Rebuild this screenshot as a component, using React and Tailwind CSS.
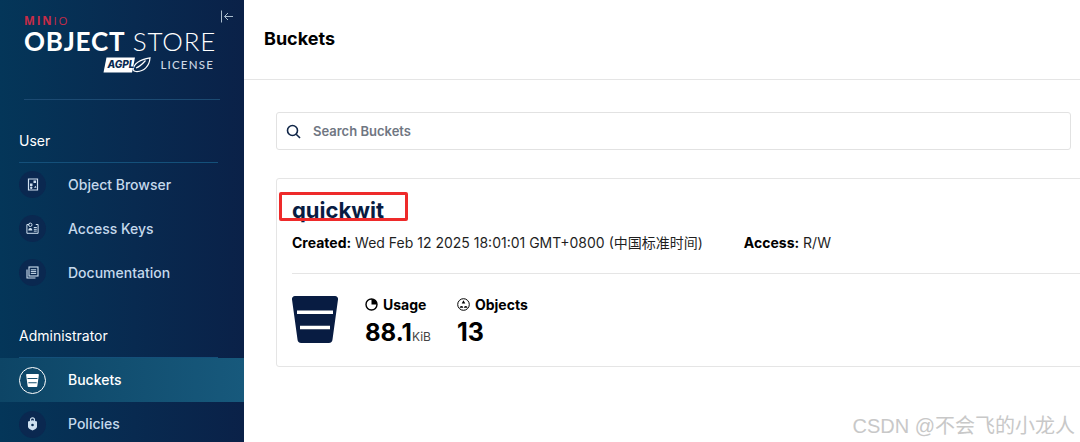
const inter = { fontFamily: '"Inter", "Noto Sans CJK SC", sans-serif' };

function ObjIcon() {
  return (
    <svg width="12" height="13" viewBox="0 0 12 13" fill="none">
      <path d="M1.5 1h6l3 0v11h-9z" stroke="#cfe0f0" strokeWidth="1.2" />
      <rect x="6.5" y="2.5" width="2.5" height="2.5" fill="#cfe0f0" />
      <rect x="3" y="5.5" width="2.5" height="2.5" fill="#cfe0f0" />
      <circle cx="4.2" cy="9.8" r="1.2" fill="#cfe0f0" />
      <path d="M7 9.8l1.5-2 1 2z" fill="#cfe0f0" />
    </svg>
  );
}
function KeyIcon() {
  return (
    <svg width="13" height="12" viewBox="0 0 13 12" fill="none">
      <path d="M3.2 2.5H.9v8.8h11.2V2.5H9.8" stroke="#cfe0f0" strokeWidth="1" />
      <circle cx="4.3" cy="2.8" r="1.7" stroke="#cfe0f0" strokeWidth="1" />
      <path d="M2.3 8.5c0-3.2 4-3.2 4 0z" fill="#cfe0f0" />
      <path d="M7.8 5.5h3M7.8 7.3h3M7.8 9.1h3" stroke="#cfe0f0" strokeWidth="1" />
    </svg>
  );
}
function DocIcon() {
  return (
    <svg width="13" height="13" viewBox="0 0 13 13" fill="none">
      <rect x="3" y="1" width="9" height="9" stroke="#cfe0f0" strokeWidth="1.1" />
      <path d="M1 3.5V12h8.5" stroke="#cfe0f0" strokeWidth="1.1" />
      <path d="M4.8 3.8h5.4M4.8 5.6h5.4M4.8 7.4h5.4" stroke="#cfe0f0" strokeWidth="1" />
    </svg>
  );
}
function BucketIcon({ color = "#fff", cut = "#17506f", w = 13, h = 13 }) {
  return (
    <svg width={w} height={h} viewBox="0 0 46 47">
      <path d="M3 0h40a3 3 0 0 1 3 3.4L40.500 43.500A3.800 3.800 0 0 1 36.800 47H9.200A3.800 3.800 0 0 1 5.500 43.500L0 3.400A3 3 0 0 1 3 0z" fill={color} />
      <path d="M5 14.500h36v3.400H5zM8 29.800h30v3.400H8z" fill={cut} />
    </svg>
  );
}
function LockIcon() {
  return (
    <svg width="11" height="14" viewBox="0 0 11 14" fill="none">
      <path d="M3.500 4V2.800a2 2 0 0 1 4 0V4" stroke="#cfe0f0" strokeWidth="1.200" />
      <path d="M5.500 3.200 10 4.500v5.200c0 1.800-2.500 3-4.500 3.800C3.500 12.700 1 11.500 1 9.700V4.500z" fill="#cfe0f0" />
      <circle cx="5.500" cy="8" r="1.300" fill="#0a2c52" />
    </svg>
  );
}
function AgplBadge() {
  return (
    <svg width="48" height="16" viewBox="0 0 48 16">
      <path d="M3.500 0.500H32L29 15.500H0.500z" fill="#fff" />
      <path d="M30 12.500C31 6 37 2.500 47 0.800 46.500 9 41 15 33 14.500 31.500 14.500 30.500 13.800 30 12.500z" fill="none" stroke="#fff" strokeWidth="1.200" />
      <path d="M33 11c3-1 6-3.500 9.500-7.500" fill="none" stroke="#fff" strokeWidth="1.200" />
      <text x="4.500" y="10.500" fontSize="10" fontWeight="800" fontStyle="italic" fill="#0a2a50" fontFamily="Inter, sans-serif">AGPL</text>
    </svg>
  );
}

function SectionTitle({ children, className = "" }) {
  return (
    <div className={`relative ml-[19px] mr-[26px] border-b border-[#14507a] pb-[13px] text-[14px] leading-[17px] text-white ${className}`}>
      {children}
    </div>
  );
}

function NavItem({ icon, label, active, labelClass = "" }) {
  return (
    <div className={`flex h-[44px] shrink-0 items-center pl-[19px] text-[14px] font-medium ${active ? "bg-[linear-gradient(90deg,#0d4566,#17597c)] text-white" : "text-[#c5d9ec]"}`}>
      <span className={`flex h-[27px] w-[27px] items-center justify-center rounded-full ${active ? "border-[1.500px] border-white" : "bg-[#0a2850]"}`}>
        {icon}
      </span>
      <span className={`ml-[22px] ${labelClass}`}>{label}</span>
    </div>
  );
}

function Sidebar() {
  return (
    <aside className="flex h-[442px] w-[244px] shrink-0 flex-col overflow-hidden bg-[linear-gradient(90deg,#043659,#082a50_55%,#0a2148)]">
      <div className="relative h-[100px] shrink-0">
        <svg className="absolute left-[220px] top-[10px]" width="14" height="13" viewBox="0 0 14 13" fill="none" stroke="#a9bccd" strokeWidth="1">
          <path d="M1.500 0.500v12M13 6.500H4.500M8 3 4.500 6.500 8 10" />
        </svg>
        <div className="mx-[24px] h-[100px] border-b border-[#1c4a72] pt-[15px]">
          <div className="text-[11.500px] font-bold leading-[11px] tracking-[1.800px] text-[#c72c48]" style={{ fontFamily: '"Open Sans", sans-serif' }}>
            MIN<span className="font-normal">IO</span>
          </div>
          <div className="mt-[1px] whitespace-nowrap text-[26px] leading-[28px] tracking-[0.800px] text-white" style={{ fontFamily: '"Lato", sans-serif' }}>
            <span className="font-bold">OBJECT</span> <span className="font-light">STORE</span>
          </div>
          <div className="mt-[2px] flex items-center justify-end pr-[6px]">
            <AgplBadge />
            <span className="ml-[9px] text-[11.500px] font-medium leading-none tracking-[1.200px] text-[#cdd8e4]" style={{ fontFamily: '"Lato", sans-serif' }}>
              LICENSE
            </span>
          </div>
        </div>
      </div>

      <SectionTitle className="mb-[-1px] mt-[32px]">User</SectionTitle>
      <NavItem icon={<ObjIcon />} label="Object Browser" />
      <NavItem icon={<KeyIcon />} label="Access Keys" />
      <NavItem icon={<DocIcon />} label="Documentation" />
      <SectionTitle className="mt-[33px]">Administrator</SectionTitle>
      <NavItem active icon={<BucketIcon />} label="Buckets" labelClass="pb-[1px]" />
      <NavItem icon={<LockIcon />} label="Policies" labelClass="pb-[1px]" />
    </aside>
  );
}

function BucketCard() {
  return (
    <section className="mr-[-20px] mt-[28px] h-[189px] rounded-[3px] border border-[#e5e5e5] pl-[15px] pt-[15px]">
      <div className="relative inline-block">
        <h2 className="text-[22px] font-bold leading-[33px] text-[#081c42]">quickwit</h2>
        <div className="absolute left-[-13px] top-[-2px] h-[29px] w-[129px] rounded-[2px] border-[3px] border-[#ee2a2a]" />
      </div>
      <div className="mt-[5px] flex h-[20px] items-center whitespace-nowrap text-[14px] text-[#1f1f1f]">
        <span>
          <b className="font-bold text-black">Created:</b> Wed Feb 12 2025 18:01:01 GMT+0800 (中国标准时间)
        </span>
        <span className="ml-[41px]">
          <b className="font-bold text-black">Access:</b> R/W
        </span>
      </div>
      <div className="mt-[21px] border-t border-[#e5e5e5]" />
      <div className="mt-[22px] flex">
        <BucketIcon color="#081c42" cut="#ffffff" w={46} h={47} />
        <div className="ml-[27px]">
          <div className="flex h-[16px] items-center text-[14px] font-bold text-black">
            <svg className="mr-[5px]" width="13" height="13" viewBox="0 0 13 13" fill="none">
              <circle cx="6.500" cy="6.500" r="5.500" stroke="#000" strokeWidth="1.400" />
              <path d="M6.500 1a5.500 5.500 0 0 1 5.500 5.500H6.500z" fill="#000" />
            </svg>
            Usage
          </div>
          <div className="mt-[6px] flex items-baseline text-[24px] font-bold leading-[29px] text-black">
            88.1<span className="text-[12px] font-normal text-[#444]">KiB</span>
          </div>
        </div>
        <div className="ml-[26px]">
          <div className="flex h-[16px] items-center text-[14px] font-bold text-black">
            <svg className="mr-[5px]" width="13" height="13" viewBox="0 0 13 13" fill="none">
              <circle cx="6.500" cy="6.500" r="5.800" stroke="#000" strokeWidth="1" />
              <path d="M6.500 2.300 8.300 5.600H4.700zM2.700 9.800a1.800 1.800 0 1 1 3.600 0zM6.900 9.800a1.800 1.800 0 1 1 3.600 0z" fill="#000" />
            </svg>
            Objects
          </div>
          <div className="mt-[6px] text-[25px] font-bold leading-[29px] text-black">13</div>
        </div>
      </div>
    </section>
  );
}

export default function App() {
  return (
    <div className="flex h-[442px] w-[1080px] overflow-hidden bg-white" style={inter}>
      <Sidebar />
      <main className="relative min-w-0 flex-1">
        <header className="flex h-[80px] items-center border-b border-[#e5e5e5] pb-[2px] pl-[20px] text-[18px] font-bold text-black">
          Buckets
        </header>
        <div className="pl-[32px] pr-[9px] pt-[32px]">
          <div className="flex h-[38px] items-center rounded-[3px] border border-[#e2e2e2] pl-[9px]">
            <svg width="15" height="15" viewBox="0 0 15 15" fill="none" stroke="#0f2547" strokeWidth="1.600">
              <circle cx="6.500" cy="6.500" r="5" />
              <path d="M10.200 10.200 14 14" />
            </svg>
            <span className="ml-[12px] pt-[1px] text-[13px] font-semibold text-[#6f7682]">Search Buckets</span>
          </div>
          <BucketCard />
        </div>
        <div className="absolute bottom-[4px] right-[5px] whitespace-nowrap text-[20px] leading-[24px] text-[#c8c8c8]" style={{ fontFamily: '"Liberation Sans", "Noto Sans CJK SC", sans-serif' }}>
          CSDN @不会飞的小龙人
        </div>
      </main>
    </div>
  );
}
